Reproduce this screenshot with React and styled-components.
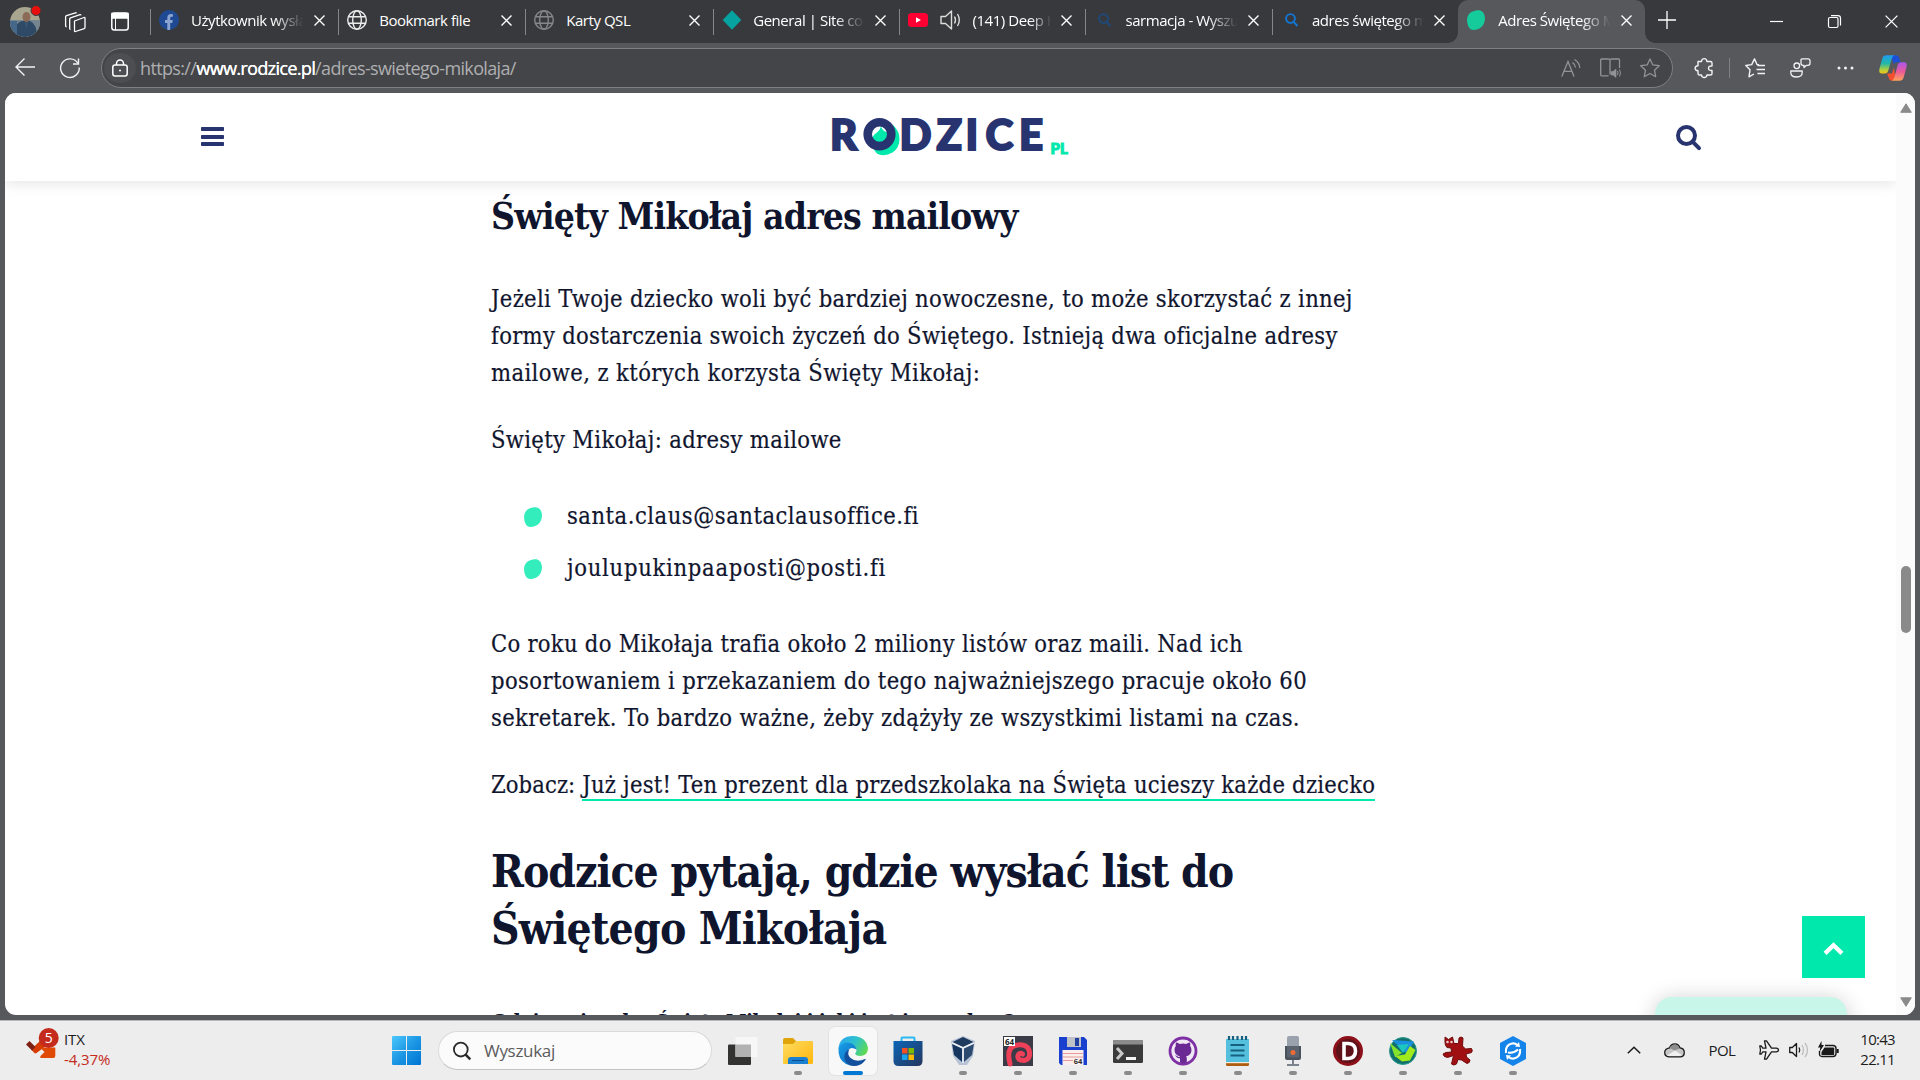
import React from "react";
import styled, { createGlobalStyle } from "styled-components";

const Global = createGlobalStyle`
  * { box-sizing: border-box; }
  html, body { margin: 0; padding: 0; overflow: hidden; }
  body { font-family: "Open Sans", "Noto Sans", sans-serif; background: #57585c; }
  svg { display: block; flex: none; overflow: visible; }
`;

const Desktop = styled.div`
  width: 1920px;
  height: 1080px;
  display: flex;
  flex-direction: column;
  overflow: hidden;
  background: #57585c;
`;

/* ---------- tab strip ---------- */
const TabStrip = styled.div`
  height: 43px;
  flex: none;
  display: flex;
  align-items: center;
  background: #38393c;
  color: #fff;
`;
const StripStart = styled.div`
  width: 150px;
  height: 43px;
  display: flex;
  align-items: center;
  padding-left: 10px;
`;
const StripIcon = styled.div`
  margin-left: ${(p) => p.$gap}px;
`;
const Tab = styled.div`
  width: ${(p) => p.$w}px;
  height: 43px;
  flex: none;
  display: flex;
  align-items: center;
  padding: 0 13px 3px 9px;
  position: relative;
  background: ${(p) => (p.$active ? "#57585c" : "transparent")};
  border-radius: 10px 10px 0 0;
  &::before {
    content: "";
    display: ${(p) => (p.$active ? "none" : "block")};
    position: absolute;
    left: 0;
    top: 9px;
    width: 1px;
    height: 26px;
    background: #858689;
  }
`;
const TabFoot = styled.i`
  position: absolute;
  bottom: 0;
  width: 10px;
  height: 10px;
  ${(p) => (p.$right ? "right: -10px;" : "left: -10px;")}
  background: radial-gradient(circle at ${(p) => (p.$right ? "100% 0" : "0 0")}, transparent 9.5px, #57585c 10px);
`;
const TabTitle = styled.div`
  flex: 1;
  height: 24px;
  margin-left: ${(p) => p.$gap || 12}px;
  overflow: hidden;
  white-space: nowrap;
  font-size: 15px;
  line-height: 24px;
  letter-spacing: -0.45px;
  margin-right: 8px;
  -webkit-mask-image: ${(p) => (p.$fade ? "linear-gradient(90deg, #000 72%, transparent 98%)" : "none")};
`;
const Sound = styled.div`
  margin-left: 12px;
`;
const NewTab = styled.div`
  margin-left: 13px;
  flex: 1;
`;
const WindowButtons = styled.div`
  display: flex;
  align-items: center;
  gap: 44.5px;
  padding-right: 22px;
`;

/* ---------- toolbar ---------- */
const Toolbar = styled.div`
  height: 50px;
  flex: none;
  display: flex;
  align-items: center;
  padding: 0 13px 0 15px;
  background: #57585c;
`;
const NavButtons = styled.div`
  width: 86px;
  display: flex;
  gap: 25px;
`;
const AddressBar = styled.div`
  width: 1572px;
  height: 40px;
  display: flex;
  align-items: center;
  padding: 0 12px 0 2px;
  border: 1px solid #7f8084;
  border-radius: 20px;
  background: #444548;
`;
const LockBadge = styled.div`
  width: 32px;
  height: 30px;
  border-radius: 16px;
  background: #4d4e51;
  display: grid;
  place-items: center;
`;
const Url = styled.div`
  flex: 1;
  margin-left: 4px;
  font-size: 18px;
  letter-spacing: -0.64px;
  color: #aeafb1;
  padding-bottom: 1px;
  b { font-weight: 400; color: #fff; text-shadow: 0.3px 0 #fff; }
`;
const PillActions = styled.div`
  display: flex;
  gap: 19px;
  align-items: center;
`;
const Actions = styled.div`
  flex: 1;
  display: flex;
  align-items: center;
  padding-left: 21px;
`;
const ActionSlot = styled.div`
  width: ${(p) => p.$w}px;
  flex: none;
`;
const Divider = styled.div`
  width: 1px;
  height: 20px;
  margin: 0 15px 0 0;
  background: #7f8084;
`;

/* ---------- page ---------- */
const PageFrame = styled.div`
  height: 922px;
  flex: none;
  margin: 0 5px 5px;
  display: flex;
  background: #fff;
  border-radius: 11px;
  overflow: hidden;
  position: relative;
`;
const Viewport = styled.div`
  flex: 1;
  display: flex;
  flex-direction: column;
`;
const SiteHeader = styled.header`
  height: 88px;
  flex: none;
  display: grid;
  grid-template-columns: 1fr auto 1fr;
  align-items: center;
  padding: 0 195px 0 196px;
  background: #fff;
  box-shadow: 0 4px 12px rgba(0, 0, 0, 0.09);
`;
const HeaderEnd = styled.div`
  justify-self: end;
`;
const Article = styled.main`
  width: 900px;
  margin-left: 486px;
  color: #10152e;
  font-family: "DejaVu Serif Condensed", "DejaVu Serif", serif;
`;
const Line = styled.span`
  display: block;
  white-space: nowrap;
  letter-spacing: ${(p) => p.$ls || 0}px;
`;
const Part = styled.span`
  letter-spacing: ${(p) => p.$ls}px;
`;
const H3 = styled.h3`
  margin: 10px 0 0;
  font-size: 37px;
  line-height: 50px;
  font-weight: 700;
`;
const H2 = styled.h2`
  margin: 39px 0 0;
  font-size: 44px;
  line-height: 57px;
  font-weight: 700;
`;
const Question = styled.h4`
  margin: 50px 0 0;
  font-size: 21px;
  line-height: 30px;
  font-weight: 700;
`;
const P = styled.p`
  margin: ${(p) => p.$top}px 0 0;
  font-size: 23.5px;
  line-height: 37px;
  -webkit-text-stroke: 0.2px #10152e;
`;
const List = styled.ul`
  list-style: none;
  margin: 39px 0 0;
  padding: 0 0 0 33px;
  display: flex;
  flex-direction: column;
  gap: 15px;
`;
const Item = styled.li`
  height: 37px;
  display: flex;
  align-items: center;
  gap: 25px;
  font-size: 23.5px;
  line-height: 37px;
  -webkit-text-stroke: 0.2px #10152e;
`;
const LinkText = styled.a`
  display: inline-block;
  height: 34px;
  line-height: 37px;
  border-bottom: 2px solid #00e8ab;
  letter-spacing: ${(p) => p.$ls}px;
`;
const ScrollTrack = styled.div`
  width: 19px;
  background: #fbfbfb;
  display: flex;
  flex-direction: column;
  align-items: center;
  padding: 10px 0 8px;
`;
const Thumb = styled.div`
  width: 10px;
  height: 67px;
  margin: 453px 0 auto;
  border-radius: 5px;
  background: #8a8a8a;
`;
const ToTop = styled.button`
  position: absolute;
  left: 1797px;
  top: 823px;
  width: 63px;
  height: 62px;
  border: 0;
  padding: 3px 0 0;
  display: grid;
  place-items: center;
  background: #00e8ab;
`;
const Bubble = styled.div`
  position: absolute;
  left: 1650px;
  top: 904px;
  width: 192px;
  height: 60px;
  border-radius: 17px;
  background: #c8f6e8;
  box-shadow: 0 2px 22px rgba(0, 0, 0, 0.2);
`;

/* ---------- taskbar ---------- */
const Taskbar = styled.div`
  height: 60px;
  flex: none;
  display: flex;
  align-items: center;
  background: #ededed;
  border-top: 1px solid #b9b9bb;
  color: #1c1c1c;
  font-size: 15px;
`;
const Widget = styled.div`
  width: 392px;
  display: flex;
  align-items: center;
  padding-left: 26px;
`;
const Stack = styled.div`
  margin-left: 9px;
  padding-bottom: 4px;
  line-height: 20px;
  letter-spacing: ${(p) => p.$ls}px;
  text-align: ${(p) => p.$align || "left"};
`;
const Loss = styled.div`
  color: #c42b1c;
`;
const SearchPill = styled.div`
  width: 274px;
  height: 39px;
  margin: 0 3px 0 17px;
  padding-left: 14px;
  display: flex;
  align-items: center;
  gap: 13px;
  border: 1px solid #dadada;
  border-bottom-color: #c4c4c4;
  border-radius: 20px;
  background: #fbfbfb;
  color: #5c5c5c;
  font-size: 17px;
  letter-spacing: -0.3px;
`;
const AppCell = styled.div`
  width: 55px;
  height: 48px;
  flex: none;
  display: flex;
  justify-content: center;
`;
const AppTile = styled.div`
  width: 48px;
  height: 48px;
  display: flex;
  flex-direction: column;
  align-items: center;
  justify-content: space-between;
  padding-top: 9px;
  border-radius: 6px;
  background: ${(p) => (p.$active ? "#f8f8f8" : "transparent")};
  box-shadow: ${(p) => (p.$active ? "0 0 0 1px #e3e3e3" : "none")};
`;
const Mark = styled.div`
  width: ${(p) => (p.$active ? 20 : 8)}px;
  height: 4px;
  border-radius: 2px;
  background: ${(p) => (p.$active ? "#0078d4" : "#8b8b8b")};
  visibility: ${(p) => (p.$hidden ? "hidden" : "visible")};
`;
const Tray = styled.div`
  flex: 1;
  display: flex;
  align-items: center;
  justify-content: flex-end;
  padding-right: 25px;
`;
const TrayItem = styled.div`
  margin-right: ${(p) => p.$gap}px;
  padding-bottom: 1px;
  letter-spacing: -0.6px;
`;

/* ---------- drawings ---------- */
const Close = ({ size = 11, c = "#fff", w = 1.4 }) => (
  <svg width={size} height={size} viewBox="0 0 11 11" stroke={c} strokeWidth={w} fill="none">
    <path d="M0.5 0.5L10.5 10.5M10.5 0.5L0.5 10.5" />
  </svg>
);
const Globe = ({ c }) => (
  <svg width="20" height="20" viewBox="0 0 20 20" fill="none" stroke={c} strokeWidth="1.4">
    <circle cx="10" cy="10" r="9.3" />
    <ellipse cx="10" cy="10" rx="4.3" ry="9.3" />
    <path d="M1.5 6.7h17M1.5 13.3h17" />
  </svg>
);
const Fb = () => (
  <svg width="20" height="20" viewBox="0 0 20 20">
    <circle cx="10" cy="10" r="10" fill="#1f4a93" />
    <path d="M8.3 20v-7H6v-3h2.300V8c0-2.600 1.400-3.900 3.700-3.900l1.900.2v2.500h-1.200c-1.200 0-1.500.7-1.500 1.500V10h2.600l-.5 3h-2.100v7z" fill="#8ca5d0" />
  </svg>
);
const Diamond = () => (
  <svg width="20" height="20" viewBox="0 0 20 20">
    <path d="M10 0.300L19.300 10L10 19.700L0.700 10z" fill="#06a29f" />
  </svg>
);
const Yt = () => (
  <svg width="20" height="20" viewBox="0 0 20 20">
    <rect x="0" y="3" width="20" height="14" rx="3.500" fill="#ff0033" />
    <path d="M8 7.200L13 10L8 12.800z" fill="#fff" />
  </svg>
);
const Speaker = () => (
  <svg width="21" height="20" viewBox="0 0 21 20" fill="none" stroke="#ddd" strokeWidth="1.400" strokeLinejoin="round">
    <path d="M1 6.500h4.500L11.500 1v18L5.500 13.500H1z" />
    <path d="M14.500 6.500q2 3.500 0 7M17.500 4q3.600 6 0 12" />
  </svg>
);
const Lens = ({ c }) => (
  <svg width="20" height="20" viewBox="0 0 20 20" fill="none" stroke={c} strokeWidth="1.900">
    <circle cx="9.500" cy="8.500" r="4.400" />
    <path d="M12.500 11.800L16.500 16" />
  </svg>
);
const Blob = ({ w, h, c }) => (
  <svg width={w} height={h} viewBox="0 0 18 20" preserveAspectRatio="none">
    <path d="M9 0.500C13.500-.8 17 1.500 17.800 6.500C18.600 12 16 17.500 10.500 19.300C6 20.800 2.500 20 1 15.500C-.5 10.500-.3 6.500 2.500 3.500C4.500 1.500 6.500 1 9 .5z" fill={c} />
  </svg>
);
const Avatar = () => (
  <svg width="30" height="30" viewBox="0 0 30 30">
    <defs>
      <clipPath id="face"><circle cx="15" cy="15" r="15" /></clipPath>
    </defs>
    <g clipPath="url(#face)">
      <rect width="30" height="30" fill="#a9a68f" />
      <rect y="13" width="30" height="17" fill="#74858f" />
      <path d="M4 30q0-14 8-16l8 0q7 3 7 16z" fill="#2f4a66" />
      <path d="M0 14h7v16H0z" fill="#45678a" />
      <ellipse cx="16.500" cy="10" rx="4" ry="5" fill="#8b6a58" />
      <path d="M14.500 15h4l-2 7z" fill="#39566f" />
    </g>
    <circle cx="26" cy="3.500" r="5" fill="#e8100c" stroke="#38393c" strokeWidth="1" />
  </svg>
);
const Workspaces = () => (
  <svg width="21" height="20" viewBox="0 0 21 20" fill="none" stroke="#fff" strokeWidth="1.300" strokeLinejoin="round">
    <path d="M9.500 9l9.500-3.500q1-.3 1 .8v9.200q0 .8-.8 1.100L10.500 19.500q-1 .3-1-.8z" />
    <path d="M5.500 17.500q-.8-.2-.8-1.200V7q0-.8.800-1.200L15 2.600q.8-.2 1 .8" />
    <path d="M1.600 15q-1-.3-1-1.200V4.800q0-.8.900-1.100L10.500.8q.8-.2 1 .6" />
  </svg>
);
const TabPanel = () => (
  <svg width="18" height="19" viewBox="0 0 18 19" fill="none" stroke="#fff" strokeWidth="1.500">
    <rect x="0.800" y="1" width="16.400" height="17" rx="2.500" />
    <path d="M1 1.500h16v4.500H1z" fill="#fff" />
    <path d="M4.500 6v12" strokeWidth="1" />
  </svg>
);
const Plus = () => (
  <svg width="18" height="18" viewBox="0 0 18 18" stroke="#fff" strokeWidth="1.300"><path d="M9 -2v18M0 7h18" /></svg>
);
const Minimize = () => (
  <svg width="13" height="13" viewBox="0 0 13 13" stroke="#fff" strokeWidth="1.200"><path d="M0 6.500h13" /></svg>
);
const Restore = () => (
  <svg width="13" height="13" viewBox="0 0 13 13" fill="none" stroke="#fff" strokeWidth="1.200">
    <rect x="0.500" y="2.500" width="9.500" height="10" rx="1.500" />
    <path d="M3 .6h7q2.500 0 2.500 2.500v7.500" />
  </svg>
);
const Back = () => (
  <svg width="20" height="18" viewBox="0 0 20 18" fill="none" stroke="#f2f2f2" strokeWidth="1.400"><path d="M9.500 .5L1 9l8.500 8.500M1 9h19" /></svg>
);
const Reload = () => (
  <svg width="20" height="20" viewBox="0 0 20 20" fill="none" stroke="#f2f2f2" strokeWidth="1.400">
    <path d="M19.200 9.500A9.300 9.300 0 1 1 17.800 5.200" />
    <path d="M18.500 .5v5.500h-5.500" />
  </svg>
);
const Lock = () => (
  <svg width="16" height="18" viewBox="0 0 16 18" fill="none" stroke="#fff" strokeWidth="1.500">
    <rect x="0.800" y="6" width="14.400" height="11" rx="2.200" />
    <path d="M4.500 6V4.500a3.500 3.500 0 0 1 7 0V6" />
    <circle cx="8" cy="11.500" r="1" fill="#fff" stroke="none" />
  </svg>
);
const ReadAloud = () => (
  <svg width="20" height="18" viewBox="0 0 20 18" fill="none" stroke="#929396" strokeWidth="1.300">
    <path d="M.8 17.500L7 2.500L13 17.500M3 12.300h8" />
    <path d="M11.500 3.500q2.700 1.800 3 5M13.500 .5q5 3 5.300 8.500" />
  </svg>
);
const Book = () => (
  <svg width="21" height="20" viewBox="0 0 21 20" fill="none" stroke="#929396" strokeWidth="1.300">
    <path d="M10 16.500V2.500Q10 1 8.500 1H1.500Q.7 1 .7 2v15q0 .8.800.8h7M10 2.500Q10 1 11.500 1h7q1 0 1 1v8" />
    <path d="M11 13.500h2l3-2.500v8.500l-3-2.500h-2z" fill="#929396" strokeWidth="0.600" />
    <path d="M17.500 13q1 2 0 4M19.500 11.500q2 3.500 0 7" strokeWidth="1" />
  </svg>
);
const starPath = "M10 .9L12.800 6.900L19.300 7.700L14.500 12.200L15.700 18.700L10 15.500L4.300 18.700L5.500 12.200L.7 7.700L7.200 6.900z";
const Star = () => (
  <svg width="20" height="20" viewBox="0 0 20 20" fill="none" stroke="#929396" strokeWidth="1.300" strokeLinejoin="round"><path d={starPath} /></svg>
);
const Puzzle = () => (
  <svg width="19" height="20" viewBox="0 0 19 20" fill="none" stroke="#f2f2f2" strokeWidth="1.400" strokeLinejoin="round">
    <path d="M4 3.500h3.500q.2-2.900 2.700-2.900t2.700 2.900H16.500q1.500 0 1.500 1.500v3q-3.500-.3-3.500 2.200t3.500 2.200v3q0 1.600-1.500 1.600H12.900q-.2 2.500-2.700 2.500t-2.700-2.500H5.600q-1.600 0-1.600-1.600v-2.700Q1.100 12.500 1.100 10.200T4 7.700z" />
  </svg>
);
const Favorites = () => (
  <svg width="21" height="20" viewBox="0 0 21 20" fill="none" stroke="#f2f2f2" strokeWidth="1.400" strokeLinejoin="round">
    <path d="M14 6.800L12 6.500L9.500.9L6.700 6.600L.8 7.500L5 11.800L4 18.800L9 16" />
    <path d="M12.500 7.500H20M11.500 11.500H20M12.500 15.500H20" />
  </svg>
);
const People = () => (
  <svg width="21" height="20" viewBox="0 0 21 20" fill="none" stroke="#f2f2f2" strokeWidth="1.300" strokeLinejoin="round">
    <circle cx="6.800" cy="7.800" r="2.800" />
    <path d="M.8 13h11.400v1.500q0 4.500-5.700 4.500T.8 14.500z" />
    <path d="M12 .8h6q2 0 2 2v2.500q0 2-2 2h-1.500l-2.500 2.300V7.300h-1q-2 0-2-2V1.800q0-1 1-1z" />
  </svg>
);
const Dots = ({ c = "#f2f2f2" }) => (
  <svg width="17" height="4" viewBox="0 0 17 4" fill={c}><circle cx="2" cy="2" r="1.500" /><circle cx="8.500" cy="2" r="1.500" /><circle cx="15" cy="2" r="1.500" /></svg>
);
const Copilot = () => (
  <svg width="28" height="26" viewBox="0 0 28 26">
    <defs>
      <linearGradient id="cpA" x1="0" y1="0" x2="0" y2="1"><stop offset="0" stopColor="#1f9bf0" /><stop offset=".45" stopColor="#22b8a8" /><stop offset=".8" stopColor="#b6cf3a" /><stop offset="1" stopColor="#f5c518" /></linearGradient>
      <linearGradient id="cpB" x1="0" y1="0" x2="0" y2="1"><stop offset="0" stopColor="#a857ee" /><stop offset=".5" stopColor="#ec5a9a" /><stop offset="1" stopColor="#ffa35a" /></linearGradient>
    </defs>
    <path d="M13 .3h4q2.500 0 3.300 2.700l1.200 4.200h-4q-2 0-2.700 2L13 4z" fill="#1b4fd8" />
    <path d="M8 18.500h5l2-6 1 8q-.5 5.300-3 5.300-2.500 0-3.200-3z" fill="#f4502f" />
    <path d="M7.500 .3h8q-2 .4-2.800 3.500L9.300 15.500q-.8 3-3.500 3H3Q-.5 18.500.4 14L3.300 3.500Q4.200.3 7.500.3z" fill="url(#cpA)" />
    <path d="M20.500 25.800h-8q2-.5 2.800-3.500l3.400-12q.8-3 3.500-3H25q3.500 0 2.600 4.500l-2.900 10.500q-1 3.500-4.200 3.500z" fill="url(#cpB)" />
  </svg>
);
const Burger = () => (
  <svg width="23" height="20" viewBox="0 0 23 20" fill="#283470">
    <rect y="0" width="23" height="4" rx="0.800" /><rect y="8" width="23" height="4" rx="0.800" /><rect y="15" width="23" height="4" rx="0.800" />
  </svg>
);
const Logo = () => (
  <svg width="240" height="44" viewBox="0 0 240 44" fontFamily="Lato, sans-serif" fontWeight="900">
    <path d="M62 10q6.500 6 6.500 14 0 9-7 13.500-7 4-13.500 2-5-2-6-9z" fill="#00e8ab" />
    <circle cx="48.500" cy="19" r="10" fill="#fff" />
    <path d="M50 11.500q1 3 3 4.500l5 2q0 6-5 10-4 2.500-8.500 1-4-3-3-7 2-3.500 4.500-4.500 3-2.500 4-6z" fill="#00e8ab" />
    <g fill="#283470" stroke="#283470" strokeWidth="2" fontSize="42">
      <text x="-1" y="34.500">R</text>
      <ellipse cx="48.500" cy="19.200" rx="11.800" ry="11.900" fill="none" strokeWidth="8.600" />
      <text x="68.500" y="34.500">D</text>
      <text x="105.500" y="34.500">Z</text>
      <text x="134.500" y="34.500">I</text>
      <text x="154.500" y="34.500">C</text>
      <text x="188" y="34.500">E</text>
    </g>
    <text x="219.500" y="39" fontSize="15" fill="#00e8ab" stroke="#00e8ab" strokeWidth="1" letterSpacing="0">PL</text>
  </svg>
);
const SiteSearch = () => (
  <svg width="25" height="25" viewBox="0 0 25 25" fill="none" stroke="#283470" strokeLinecap="round">
    <circle cx="10.500" cy="10.500" r="8.500" strokeWidth="4" />
    <path d="M17 17.200L23 23.200" strokeWidth="4" />
  </svg>
);
const ArrowUp = () => (
  <svg width="12" height="10" viewBox="0 0 12 10"><path d="M6 .8L11.300 9.300H.7z" fill="#8a8a8a" stroke="#8a8a8a" strokeLinejoin="round" /></svg>
);
const ArrowDown = () => (
  <svg width="12" height="10" viewBox="0 0 12 10"><path d="M6 9.300L11.300.8H.7z" fill="#8a8a8a" stroke="#8a8a8a" strokeLinejoin="round" /></svg>
);
const Chevron = ({ w, h, c, s }) => (
  <svg width={w} height={h} viewBox="0 0 14 8" fill="none" stroke={c} strokeWidth={s}><path d="M.8 7.200L7 1.200L13.200 7.200" /></svg>
);
const Stock = () => (
  <svg width="29" height="30" viewBox="0 0 29 30">
    <path d="M5 13.500L14.500 4.500L20 10L10.500 17Q9 18 8 16.500z" fill="#d83b01" />
    <path d="M0 8.500L3.500 5L9.500 11L6 14.500z" fill="#7d2115" />
    <path d="M18 11.500h11.300v8.500q0 2-2 2H15.500q-2 0-1-2l4-4-3.500-3.500z" fill="#e04a05" />
    <circle cx="22.700" cy="2" r="10" fill="#c42b1c" />
    <text x="22.700" y="7" fontSize="14" textAnchor="middle" fill="#fff">5</text>
  </svg>
);
const Start = () => (
  <svg width="29" height="29" viewBox="0 0 29 29">
    <defs><linearGradient id="win" x1="0" y1="0" x2="1" y2="1"><stop offset="0" stopColor="#4cc8fc" /><stop offset=".5" stopColor="#1c97e4" /><stop offset="1" stopColor="#0073d2" /></linearGradient></defs>
    <path d="M1 0H14V14H0V1Q0 0 1 0zM15 0H28Q29 0 29 1V14H15zM0 15H14V29H1Q0 29 0 28zM15 15H29V28Q29 29 28 29H15z" fill="url(#win)" />
  </svg>
);
const TaskLens = () => (
  <svg width="18" height="18" viewBox="0 0 18 18" fill="none" stroke="#2a2a2a"><circle cx="7.800" cy="7.600" r="6.900" strokeWidth="1.800" /><path d="M12.600 12.600L17.300 17.400" strokeWidth="2.500" /></svg>
);
const icon = { width: 30, height: 30, viewBox: "0 0 30 30" };
const TaskView = () => (
  <svg {...icon}>
    <rect x="0" y="8.500" width="23" height="20.500" rx="1" fill="#333432" />
    <rect x="7.500" y="1" width="22" height="20" rx="1" fill="#f7f7f7" />
    <rect x="7.500" y="8.500" width="15.500" height="12.500" fill="#b2b2b2" />
  </svg>
);
const Folder = () => (
  <svg {...icon}>
    <defs><linearGradient id="fold" x1="0" y1="0" x2="1" y2="1"><stop offset="0" stopColor="#ffdc62" /><stop offset="1" stopColor="#fdb60c" /></linearGradient></defs>
    <path d="M0 4q0-2 2-2h8l3 3h15q2 0 2 2v4H0z" fill="#e0a30a" />
    <path d="M0 8h10l3-3h15q2 0 2 2v19q0 2-1 2H1q-1 0-1-1z" fill="url(#fold)" />
    <path d="M5 28v-4q0-3 3-3h14q3 0 3 3v4z" fill="#1a80cf" /><path d="M9 24.500h12" stroke="#0b4f92" />
  </svg>
);
const Edge = () => (
  <svg {...icon}>
    <defs>
      <linearGradient id="edA" x1="0" y1=".3" x2="1" y2=".7"><stop offset="0" stopColor="#2aa9ee" /><stop offset=".5" stopColor="#2fc2c9" /><stop offset="1" stopColor="#62db4a" /></linearGradient>
      <linearGradient id="edB" x1="0" y1="0" x2="1" y2="1"><stop offset="0" stopColor="#1aa0e8" /><stop offset="1" stopColor="#0a62ba" /></linearGradient>
    </defs>
    <path d="M.5 12Q2 0 15 0q13 .5 15 12 0 7.500-7.500 8-4.500 0-5.500-2.500 3-3 0-6.500Q10 4 .5 12z" fill="url(#edA)" />
    <path d="M.5 12Q4 6 10 6.500q7 1 8.500 7-5-3-8 0-4 6 1 11 4 4 9 4.500Q14 31 8 28-.500 23 .5 12z" fill="url(#edB)" />
    <path d="M11.500 13q-3 5 1 9 6 5 14.500 1 1-.3.500 1-6 8-15.500 5.200Q4.500 25 7 17.500q1.500-3.500 4.500-4.500z" fill="#124f9c" />
  </svg>
);
const Store = () => (
  <svg {...icon}>
    <defs><linearGradient id="sto" x1="0" y1="0" x2="1" y2="1"><stop offset="0" stopColor="#0b66b8" /><stop offset="1" stopColor="#25365e" /></linearGradient></defs>
    <path d="M8.500 7V2.500q0-1 1-1h11q1 0 1 1V7" fill="none" stroke="#2bb9f2" strokeWidth="2" />
    <path d="M.5 5h29v20q0 5-5 5h-19q-5 0-5-5z" fill="url(#sto)" />
    <rect x="9" y="12" width="5.500" height="5.500" fill="#f25022" /><rect x="15.500" y="12" width="5.500" height="5.500" fill="#7fba00" />
    <rect x="9" y="18.500" width="5.500" height="5.500" fill="#1da3ec" /><rect x="15.500" y="18.500" width="5.500" height="5.500" fill="#ffb900" />
  </svg>
);
const VBox = () => (
  <svg {...icon}>
    <path d="M3 5l12-5 12 5-2 15-6 9h-8l-6-9z" fill="#b9c3d6" />
    <path d="M4.500 6L15 1l10.500 5L15 11z" fill="#1f3a5f" /><path d="M4 7.500L14 12.500V26L6 19z" fill="#17365f" /><path d="M26 7.500L16 12.500V26l8-7z" fill="#2c4a70" />
    <path d="M4 7l11 5 11-5M15 12v15" fill="none" stroke="#e9eef5" strokeWidth="1.500" />
  </svg>
);
const Spiral = () => (
  <svg {...icon}>
    <rect width="30" height="30" fill="#3b3b47" />
    <path d="M7 28q-4-16 5-18.500 11-2.500 14 4.500 2.500 9-5 10.500-7 0-6-5 1.500-3.500 4.500-1.500" fill="none" stroke="#ee4058" strokeWidth="5" strokeLinecap="round" />
    <rect x="1" y="1" width="11" height="9" fill="#fff" />
    <text x="6.500" y="8.500" fontSize="8" fontWeight="700" textAnchor="middle" fill="#222">64</text>
  </svg>
);
const Floppy = () => (
  <svg {...icon}>
    <path d="M1 1h25l3 3v25H3l-2-2z" fill="#1a40cf" /><rect x="9" y="1" width="14" height="10" fill="#bfc3c8" /><rect x="17" y="2" width="4" height="8" fill="#2340a0" />
    <rect x="4.500" y="14" width="21" height="15" fill="#fbeeee" /><path d="M5 17.500h20M5 21h20M5 24.500h10" stroke="#e79a9a" />
    <text x="20" y="27.500" fontSize="7.500" fontWeight="700" textAnchor="middle" fill="#333">64</text>
  </svg>
);
const Terminal = () => (
  <svg {...icon}>
    <rect y="4" width="30" height="23" rx="1.500" fill="#3a3a3a" /><path d="M0 8.500V5.500Q0 4 1.500 4h27q1.500 0 1.500 1.500v3z" fill="#8b8b8b" />
    <path d="M4 12l5 5.500L4 23" fill="none" stroke="#c9c9c9" strokeWidth="3" /><path d="M13 22.500h10" stroke="#f5f5f5" strokeWidth="3" />
  </svg>
);
const Github = () => (
  <svg {...icon}>
    <circle cx="15" cy="15" r="13" fill="#f0e9f5" stroke="#7d2fa3" strokeWidth="2.800" />
    <path d="M12 26.500v-4.200c-3 .5-3.500-2-5-2.800 2-.3 2.500 1.500 4 1.500l1.300-.8c-4-.6-6-3-5.700-6.700 0-1.400.5-2.500 1.300-3.500-.4-1.300-.2-2.600.2-3.600 1.400 0 2.600.8 3.600 1.500q3.300-.8 6.600 0c1-.7 2.200-1.500 3.600-1.500.4 1 .6 2.300.2 3.600.8 1 1.300 2.100 1.300 3.500.3 3.700-1.700 6.100-5.400 6.700.7.800.8 1.500.8 2.500v3.800q-3.400 1.300-6.800 0z" fill="#6b2a93" />
  </svg>
);
const Notepad = () => (
  <svg width="23" height="30" viewBox="0 0 23 30">
    <path d="M0 3h23v23H0z" fill="#55c0de" /><path d="M0 27h23v1.500q0 1.500-1.500 1.500h-20Q0 30 0 28.500z" fill="#ad5c12" /><path d="M0 26h23v1.200H0z" fill="#f3ead8" />
    <path d="M3 0v4M7 0v4M11.500 0v4M16 0v4M20 0v4" stroke="#14607e" strokeWidth="2.200" /><path d="M4.500 9h14M4.500 14.500h14M4.500 19.500h14" stroke="#14607e" strokeWidth="1.800" />
  </svg>
);
const Mic = () => (
  <svg {...icon}>
    <path d="M9 2q0-2 2-2h8q2 0 2 2v9H9z" fill="#9aa3ad" /><path d="M7 10h16v12q0 2-2 2H9q-2 0-2-2z" fill="#4a525c" /><path d="M9 10h12v10q0 1.500-1.500 1.500h-9Q9 21.500 9 20z" fill="#5a636e" />
    <circle cx="15" cy="16.500" r="2.500" fill="#ee6b33" /><path d="M15 24v5M9 29h12" stroke="#7b848e" strokeWidth="2" />
  </svg>
);
const DApp = () => (
  <svg {...icon}>
    <circle cx="15" cy="15" r="15" fill="#8c1019" /><circle cx="15" cy="15" r="12" fill="#5e1118" />
    <path d="M11 7.500h4.500q7 .5 7 7.500t-7 7.500H11z" fill="none" stroke="#fff" strokeWidth="3.600" />
  </svg>
);
const GreenApp = () => (
  <svg {...icon}>
    <circle cx="15" cy="15" r="13.500" fill="#12706c" stroke="#2d9c91" />
    <path d="M4 4L26 5.500L19 18z" fill="#1c8fe0" /><path d="M9 9L21 8L15 17z" fill="#1cc7c0" />
    <path d="M2 7L14 17L7 21z" fill="#83e22c" />
    <path d="M7 20L17 18.500L22 10L27.500 14L22 24.500L14 25.500z" fill="#a0ea1e" />
  </svg>
);
const RedApp = () => (
  <svg {...icon}>
    <path d="M2 1l3.500 2.500L9.500 1l1.500 6.500h4.500L16 2q2-2 4 0l-.5 8 3 3 6-.5q1.500 2 0 4l-5.500 1.500.5 3 3.500 3q0 3-3 3.500l-5.500-3.500-3.500-.5-1.500 4.500q-3 2-5 0l2-8.500-6 2q-4-.5-4.500-3.500l3-1.500 5.500-.5-.5-4L4 11.500q-2-2-2-5z" fill="#a01012" stroke="#6f0b0c" />
    <circle cx="4.500" cy="6" r="1.300" fill="#e7c9c9" /><circle cx="8.500" cy="6" r="1.300" fill="#e7c9c9" />
  </svg>
);
const HexApp = () => (
  <svg {...icon}>
    <path d="M15 0l13 7v16l-13 7L2 23V7z" fill="#1483ea" />
    <path d="M8 17q-1-8 6-9.500 3-.5 5.500 1.500M22 13q1 8-6 9.500-3 .5-5.500-1.500" fill="none" stroke="#fff" strokeWidth="2.200" /><path d="M10 16.500q6 1 10-3" fill="none" stroke="#fff" strokeWidth="2" />
    <path d="M17 10.500l5 .5-1-5zM13 19.500l-5-.5 1 5z" fill="#fff" />
  </svg>
);
const Cloud = () => (
  <svg width="21" height="15" viewBox="0 0 21 15">
    <path d="M5.500 4.800Q7 .8 11 .8q3.500 0 5 4 4.300.5 4.300 4.700 0 4.300-4.300 4.300H4.800Q.7 13.500.7 9.500.8 5.500 5.500 4.800z" fill="#c6c6c6" stroke="#1a1a1a" strokeWidth="1.300" />
    <path d="M5.500 5Q7.500 1.500 11 1.500q3.500.5 4.500 4l-5 2z" fill="#8d8d8d" /><path d="M3 12.500l8-5 7 4.500q-1 1-3 1H5q-1 0-2-.5z" fill="#efefef" />
  </svg>
);
const Plane = () => (
  <svg width="20" height="20" viewBox="0 0 20 20" fill="none" stroke="#1a1a1a" strokeWidth="1.300" strokeLinejoin="round">
    <path d="M7 8.200L5.500 .8h2l5 7.400h5q2 .3 2 1.800t-2 1.800h-5l-5 7.400h-2L7 11.800H3.800L2.300 14H.8L1.500 10L.8 6h1.500l1.500 2.200z" />
  </svg>
);
const Volume = () => (
  <svg width="20" height="16" viewBox="0 0 20 16" fill="none" stroke="#1a1a1a" strokeWidth="1.300" strokeLinejoin="round">
    <path d="M.7 5.500h2.600L7.500 1.500v13L3.300 10.500H.7z" /><path d="M10 5.500q1.500 2.500 0 5" /><path d="M13 3q3 5 0 10M16 .8q5 7.200 0 14.400" stroke="#bdbdbd" />
  </svg>
);
const Battery = () => (
  <svg width="21" height="18" viewBox="0 0 21 18">
    <path d="M7 4.500h8q3 0 3 3v5q0 3-3 3H4q-2.500 0-2.500-2.500V10" fill="none" stroke="#1a1a1a" strokeWidth="1.400" />
    <path d="M6.500 6.500h9q.7 0 .7.700v6q0 .7-.7.700h-12v-3z" fill="#1a1a1a" /><path d="M18.500 8h2.200v4h-2.200z" fill="#1a1a1a" /><path d="M3.500 0L0 6.500h2.300L1.500 11 6 4H3.600z" fill="#1a1a1a" />
  </svg>
);

const tabs = [
  { w: 188.2, icon: <Fb />, title: "Użytkownik wysła", fade: true },
  { w: 187, icon: <Globe c="#ececec" />, title: "Bookmark file" },
  { w: 188, icon: <Globe c="#86878a" />, title: "Karty QSL" },
  { w: 186.3, icon: <Diamond />, title: "General | Site con", fade: true, gap: 11 },
  { w: 186, icon: <Yt />, title: "(141) Deep H", fade: true, sound: true, gap: 11 },
  { w: 186.4, icon: <Lens c="#1d4a7c" />, title: "sarmacja - Wyszu", fade: true, gap: 11 },
  { w: 186.4, icon: <Lens c="#1277d6" />, title: "adres świętego m", fade: true, gap: 11 },
  { w: 186.4, icon: <Blob w={18} h={20} c="#15cb9b" />, title: "Adres Świętego M", fade: true, active: true, gap: 13 },
];

const apps = [
  { icon: <TaskView />, off: true },
  { icon: <Folder /> },
  { icon: <Edge />, active: true },
  { icon: <Store />, off: true },
  { icon: <VBox /> },
  { icon: <Spiral /> },
  { icon: <Floppy /> },
  { icon: <Terminal /> },
  { icon: <Github /> },
  { icon: <Notepad /> },
  { icon: <Mic /> },
  { icon: <DApp /> },
  { icon: <GreenApp /> },
  { icon: <RedApp /> },
  { icon: <HexApp /> },
];

export default function App() {
  return (
    <Desktop>
      <Global />
      <TabStrip>
        <StripStart>
          <Avatar />
          <StripIcon $gap={25}><Workspaces /></StripIcon>
          <StripIcon $gap={25}><TabPanel /></StripIcon>
        </StripStart>
        {tabs.map((t) => (
          <Tab key={t.title} $w={t.w} $active={t.active}>
            {t.active && <><TabFoot /><TabFoot $right /></>}
            {t.icon}
            {t.sound && <Sound><Speaker /></Sound>}
            <TabTitle $fade={t.fade} $gap={t.gap}>{t.title}</TabTitle>
            <Close />
          </Tab>
        ))}
        <NewTab><Plus /></NewTab>
        <WindowButtons>
          <Minimize />
          <Restore />
          <Close size={13} w={1.1} />
        </WindowButtons>
      </TabStrip>

      <Toolbar>
        <NavButtons><Back /><Reload /></NavButtons>
        <AddressBar>
          <LockBadge><Lock /></LockBadge>
          <Url>https://<b>www.rodzice.pl</b>/adres-swietego-mikolaja/</Url>
          <PillActions><ReadAloud /><Book /><Star /></PillActions>
        </AddressBar>
        <Actions>
          <ActionSlot $w={35}><Puzzle /></ActionSlot>
          <Divider />
          <ActionSlot $w={45}><Favorites /></ActionSlot>
          <ActionSlot $w={47}><People /></ActionSlot>
          <ActionSlot $w={41.5}><Dots /></ActionSlot>
          <Copilot />
        </Actions>
      </Toolbar>

      <PageFrame>
        <Viewport>
          <SiteHeader>
            <Burger />
            <Logo />
            <HeaderEnd><SiteSearch /></HeaderEnd>
          </SiteHeader>
          <Article>
            <H3><Line $ls={-0.9}>Święty Mikołaj adres mailowy</Line></H3>
            <P $top={40}>
              <Line $ls={0.33}>Jeżeli Twoje dziecko woli być bardziej nowoczesne, to może skorzystać z innej</Line>
              <Line $ls={0.3}>formy dostarczenia swoich życzeń do Świętego. Istnieją dwa oficjalne adresy</Line>
              <Line $ls={0.39}>mailowe, z których korzysta Święty Mikołaj:</Line>
            </P>
            <P $top={30}><Line $ls={0.34}>Święty Mikołaj: adresy mailowe</Line></P>
            <List>
              <Item><Blob w={18} h={20} c="#33edbc" /><Line $ls={0.51}>santa.claus@santaclausoffice.fi</Line></Item>
              <Item><Blob w={18} h={20} c="#33edbc" /><Line $ls={0.72}>joulupukinpaaposti@posti.fi</Line></Item>
            </List>
            <P $top={39}>
              <Line $ls={0.28}>Co roku do Mikołaja trafia około 2 miliony listów oraz maili. Nad ich</Line>
              <Line $ls={0.4}>posortowaniem i przekazaniem do tego najważniejszego pracuje około 60</Line>
              <Line $ls={0.35}>sekretarek. To bardzo ważne, żeby zdążyły ze wszystkimi listami na czas.</Line>
            </P>
            <P $top={30}>
              <Line $ls={0.1}>Zobacz: <LinkText $ls={0.25}>Już jest! Ten prezent dla przedszkolaka na Święta ucieszy każde dziecko</LinkText></Line>
            </P>
            <H2>
              <Line $ls={-1}>Rodzice pytają, gdzie wysłać list do</Line>
              <Line $ls={-0.73}>Świętego Mikołaja</Line>
            </H2>
            <Question>
              <Line $ls={-0.75}><Part $ls={0.45}>Gdzie mieszka </Part>Święty Mikołaj i jaki jest jego adres?</Line>
            </Question>
          </Article>
        </Viewport>
        <ScrollTrack><ArrowUp /><Thumb /><ArrowDown /></ScrollTrack>
        <Bubble />
        <ToTop><Chevron w={19} h={12} c="#fff" s={3.2} /></ToTop>
      </PageFrame>

      <Taskbar>
        <Widget>
          <Stock />
          <Stack $ls={-0.1}><div>ITX</div><Loss>-4,37%</Loss></Stack>
        </Widget>
        <Start />
        <SearchPill><TaskLens />Wyszukaj</SearchPill>
        {apps.map((a, i) => (
          <AppCell key={i}>
            <AppTile $active={a.active}>
              {a.icon}
              <Mark $active={a.active} $hidden={a.off} />
            </AppTile>
          </AppCell>
        ))}
        <Tray>
          <TrayItem $gap={23}><Chevron w={14} h={8} c="#1a1a1a" s={1.5} /></TrayItem>
          <TrayItem $gap={24}><Cloud /></TrayItem>
          <TrayItem $gap={24}>POL</TrayItem>
          <TrayItem $gap={10}><Plane /></TrayItem>
          <TrayItem $gap={9}><Volume /></TrayItem>
          <TrayItem $gap={12}><Battery /></TrayItem>
          <Stack $ls={-0.7} $align="right"><div>10:43</div><div>22.11</div></Stack>
        </Tray>
      </Taskbar>
    </Desktop>
  );
}
